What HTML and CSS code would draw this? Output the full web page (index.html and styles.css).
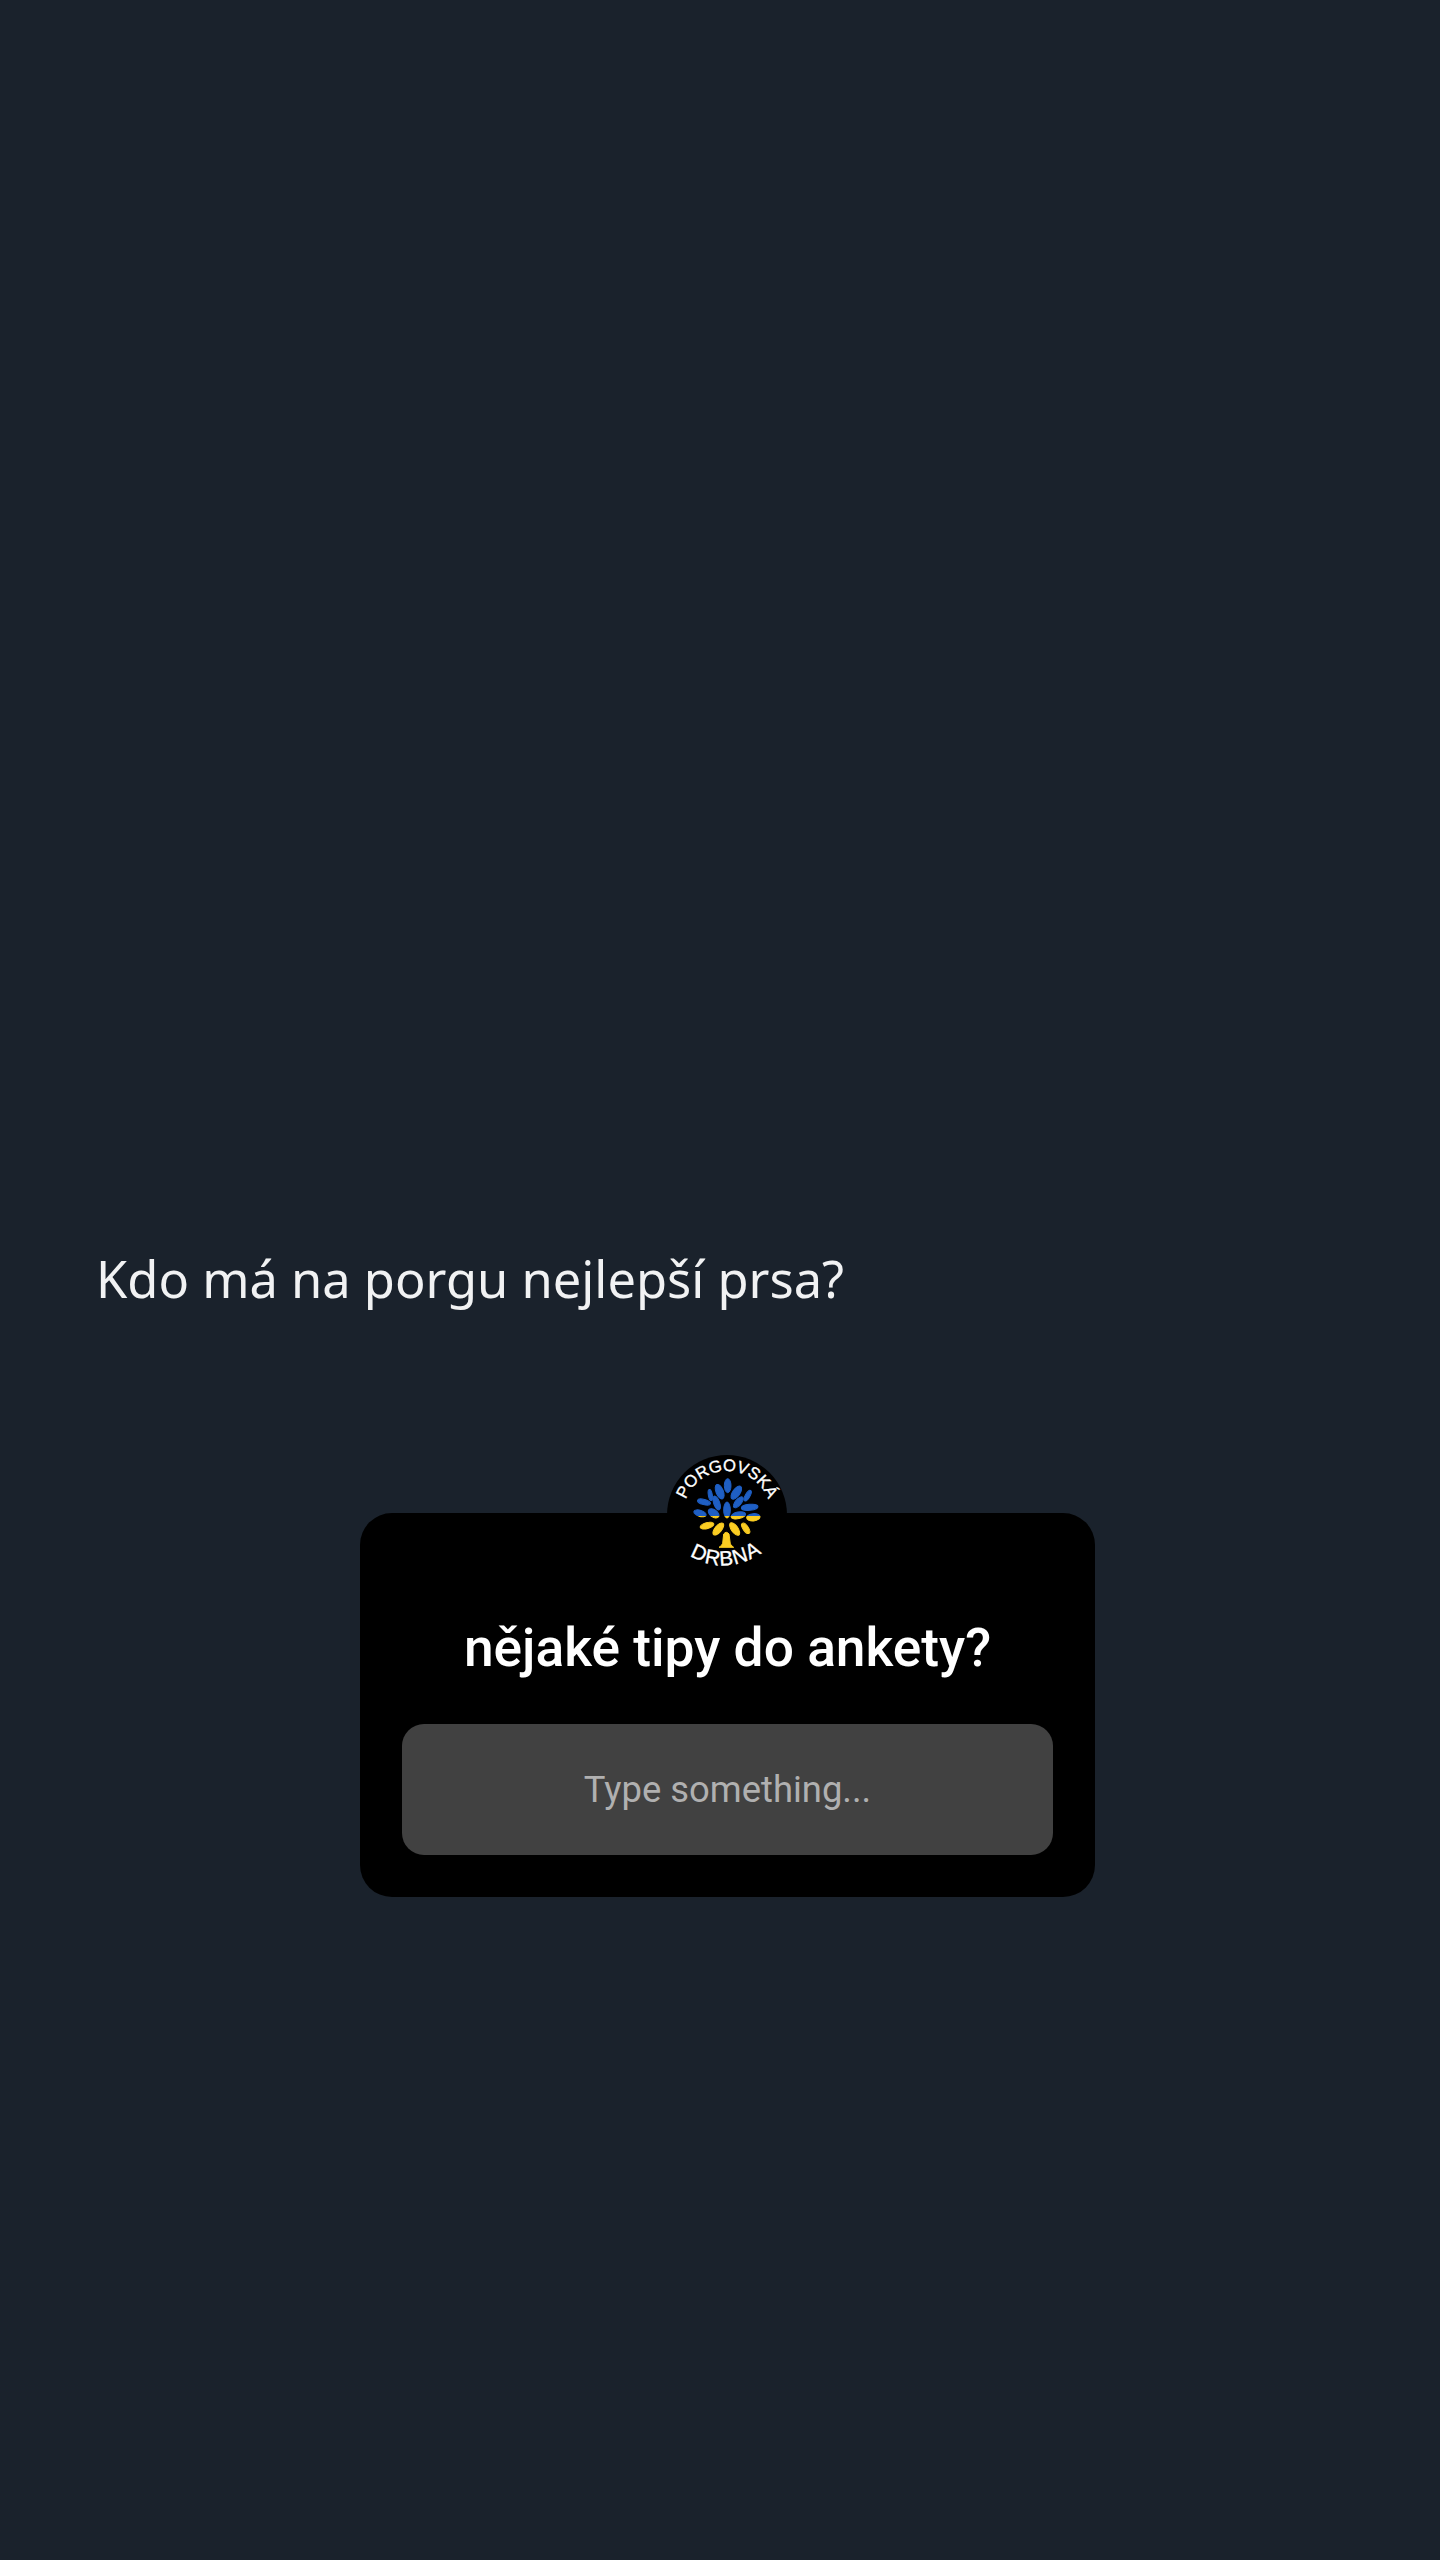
FILE: index.html
```html
<!DOCTYPE html>
<html lang="en">
<head>
  <meta charset="UTF-8" />
  <title>Story</title>
  <link rel="stylesheet" href="styles.css">
</head>
<body>

  <!-- Caption -->
  <p class="caption">Kdo má na porgu nejlepší prsa?</p>

  <!-- Question sticker -->
  <div class="sticker">
    <svg class="avatar" viewBox="80 75 360 360" aria-label="Porgovská drbna">
      <defs>
        <clipPath id="topHalf"><rect x="80" y="75" width="360" height="183"></rect></clipPath>
        <clipPath id="bottomHalf"><rect x="80" y="258" width="360" height="180"></rect></clipPath>
        <g id="leaves">
          <ellipse cx="262" cy="167" rx="10" ry="21"></ellipse>
          <ellipse cx="238" cy="185" rx="11" ry="23" transform="rotate(-22 238 185)"></ellipse>
          <ellipse cx="288" cy="188" rx="11" ry="23" transform="rotate(35 288 188)"></ellipse>
          <ellipse cx="210" cy="195" rx="6" ry="17" transform="rotate(-10 210 195)"></ellipse>
          <ellipse cx="322" cy="197" rx="7" ry="18" transform="rotate(30 322 197)"></ellipse>
          <ellipse cx="229" cy="219" rx="9" ry="22" transform="rotate(-20 229 219)"></ellipse>
          <ellipse cx="294" cy="217" rx="9" ry="20" transform="rotate(40 294 217)"></ellipse>
          <ellipse cx="191" cy="216" rx="20" ry="8" transform="rotate(15 191 216)"></ellipse>
          <ellipse cx="328" cy="232" rx="25" ry="9" transform="rotate(-6 328 232)"></ellipse>
          <ellipse cx="260" cy="240" rx="10" ry="24"></ellipse>
          <ellipse cx="220" cy="250" rx="18" ry="11" transform="rotate(35 220 250)"></ellipse>
          <ellipse cx="294" cy="256" rx="22" ry="10" transform="rotate(-12 294 256)"></ellipse>
          <ellipse cx="179" cy="250" rx="19" ry="9" transform="rotate(18 179 250)"></ellipse>
          <ellipse cx="339" cy="262" rx="20" ry="11" transform="rotate(-6 339 262)"></ellipse>
        </g>
      </defs>
      <circle cx="260" cy="255" r="180" fill="#000"></circle>
      <use href="#leaves" fill="#1f5fc4" stroke="#1f5fc4" stroke-width="3" clip-path="url(#topHalf)"></use>
      <use href="#leaves" fill="#fbcd22" stroke="#fbcd22" stroke-width="3" clip-path="url(#bottomHalf)"></use>
      <g fill="#fbcd22" stroke="#fbcd22" stroke-width="3">
        <ellipse cx="200" cy="287" rx="21" ry="9" transform="rotate(-15 200 287)"></ellipse>
        <ellipse cx="234" cy="297" rx="10" ry="22" transform="rotate(40 234 297)"></ellipse>
        <ellipse cx="283" cy="297" rx="10" ry="22" transform="rotate(-35 283 297)"></ellipse>
        <ellipse cx="316" cy="295" rx="8" ry="18" transform="rotate(-35 316 295)"></ellipse>
        <path d="M250 312 Q258 302 266 312 L270 342 Q276 350 280 352 L236 352 Q244 348 247 340 Z"></path>
      </g>
      <path id="arcTop" d="M128 255 A132 132 0 0 1 392 255" fill="none"></path>
      <path id="arcBottom" d="M140 372 Q255 445 375 362" fill="none"></path>
      <text class="avatar-text" font-size="50"><textPath href="#arcTop" startOffset="50%" text-anchor="middle">PORGOVSKÁ</textPath></text>
      <text class="avatar-text avatar-text-wide" font-size="62"><textPath href="#arcBottom" startOffset="50%" text-anchor="middle">DRBNA</textPath></text>
    </svg>
    <h2 class="sticker-title">nějaké tipy do ankety?</h2>
    <div class="sticker-input">Type something...</div>
  </div>

</body>
</html>
```

FILE: styles.css
```css
html, body {
  height: 100%;
}

body {
  background-color: #1a222c;
  color: white;
  margin: 0;
  padding: 0;
  height: 2560px;
  overflow: hidden;
}

.caption {
  margin: 0;
  padding: 1243px 0 0 96px;
  font-family: "Noto Sans", sans-serif;
  font-size: 50.6px;
  line-height: 72px;
  color: #f1f2f3;
}

.sticker {
  position: relative;
  box-sizing: border-box;
  width: 735px;
  height: 384px;
  margin: 198px 0 0 360px;
  padding: 105px 42px 42px;
  background-color: #000;
  border-radius: 32px;
  font-family: Roboto, sans-serif;
  text-align: center;
}

.avatar {
  position: absolute;
  top: -58px;
  left: 307px;
  width: 120px;
  height: 120px;
}

.avatar-text {
  fill: #fff;
  stroke: #fff;
  stroke-width: 1;
  font-family: "Liberation Sans", sans-serif;
}

.avatar-text-wide {
  letter-spacing: 3px;
}

.sticker-title {
  margin: 0 0 46px;
  font-size: 53.3px;
  line-height: 60px;
  font-weight: 500;
  color: #fff;
}

.sticker-input {
  height: 131px;
  line-height: 132px;
  background-color: #414141;
  border-radius: 22px;
  font-size: 36.4px;
  color: #b0b0b0;
}
```
